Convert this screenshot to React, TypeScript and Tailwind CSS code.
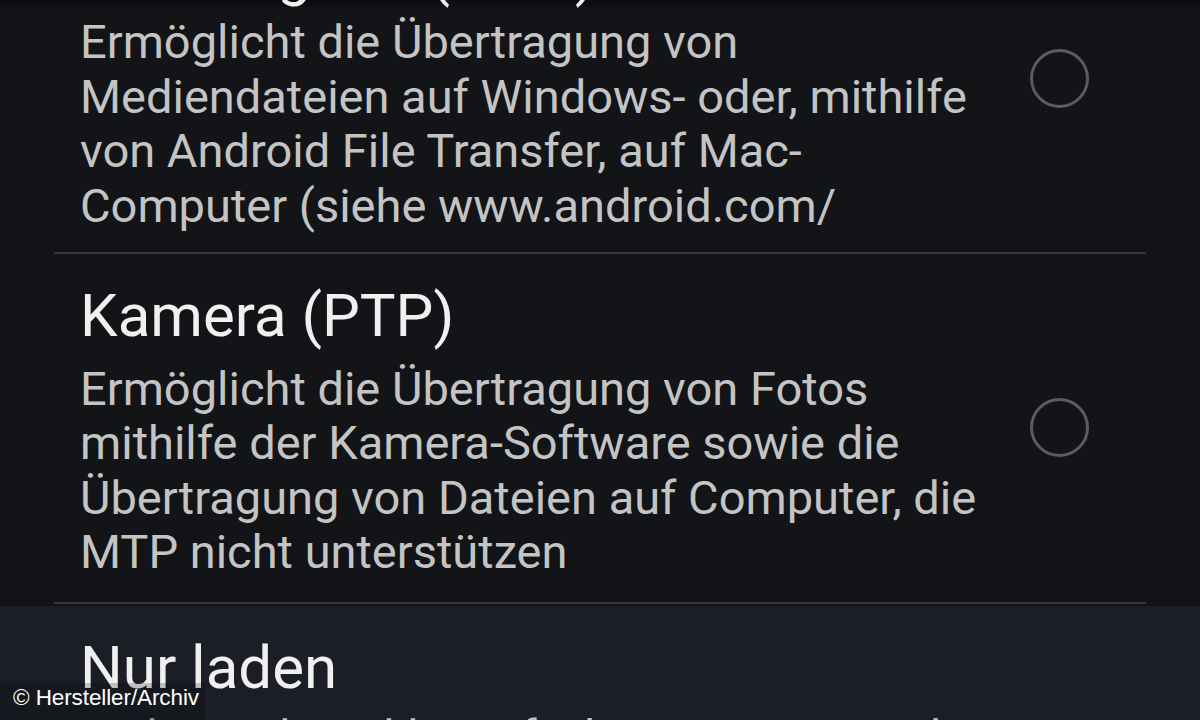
import React from "react";

type Item = {
  title: string;
  lines: string[];
  pt: string;
  titleMb: string;
  pb: string;
  circleMb: string;
  divider: boolean;
};

const items: Item[] = [
  {
    title: "Mediengerät (MTP)",
    lines: [
      "Ermöglicht die Übertragung von",
      "Mediendateien auf Windows- oder, mithilfe",
      "von Android File Transfer, auf Mac-",
      "Computer (siehe www.android.com/",
    ],
    pt: "pt-0",
    titleMb: "mb-[6px]",
    pb: "pb-[19px]",
    circleMb: "mb-[16px]",
    divider: true,
  },
  {
    title: "Kamera (PTP)",
    lines: [
      "Ermöglicht die Übertragung von Fotos",
      "mithilfe der Kamera-Software sowie die",
      "Übertragung von Dateien auf Computer, die",
      "MTP nicht unterstützen",
    ],
    pt: "pt-[27px]",
    titleMb: "mb-[10.5px]",
    pb: "pb-[22.5px]",
    circleMb: "mb-[5px]",
    divider: true,
  },
  {
    title: "Nur laden",
    lines: ["Lädt nur den Akku auf, ohne Dateien zu übertragen"],
    pt: "pt-[28.5px]",
    titleMb: "mb-[7.5px]",
    pb: "pb-0",
    circleMb: "mb-0",
    divider: false,
  },
];

function Row({ item }: { item: Item }) {
  return (
    <div>
      <div className={`flex items-center ${item.pt} ${item.pb}`}>
        <div className="flex-1 pl-[26px]">
          <div
            className={`text-[60px] leading-[70px] text-[#f0f0f0] whitespace-nowrap ${item.titleMb}`}
          >
            {item.title}
          </div>
          <div className="text-[47px] leading-[54.5px] text-[#c4c4c4]">
            {item.lines.map((l, i) => (
              <div key={i} className="whitespace-nowrap">
                {l}
              </div>
            ))}
          </div>
        </div>
        {item.divider && (
          <div
            className={`mr-[57px] ${item.circleMb} h-[59px] w-[59px] shrink-0 rounded-full border-[3px] border-[#5a5c5f]`}
          />
        )}
      </div>
      {item.divider && <div className="h-[2px] bg-[#383a3e]" />}
    </div>
  );
}

export default function App() {
  return (
    <div
      className="relative h-[720px] w-[1200px] overflow-hidden bg-[linear-gradient(to_bottom,#0c0e10_0px,#0c0e10_7px,#121417_7px,#121417_606px,#1b1e26_606px,#1b1e26_720px)]"
      style={{ fontFamily: "Roboto, 'Noto Sans', sans-serif" }}
    >
      <div className="ml-[54px] mt-[-61px] w-[1092px]">
        {items.map((it, i) => (
          <Row key={i} item={it} />
        ))}
      </div>
      <div className="absolute left-0 top-[683px] bg-black/20 pl-[13px] pr-[6px] pt-[3px] pb-[10px]">
        <div
          className="text-[22.5px] leading-[24px] tracking-[-0.1px] text-white whitespace-nowrap"
          style={{ fontFamily: "'Liberation Sans', Arial, sans-serif" }}
        >
          © Hersteller/Archiv
        </div>
      </div>
    </div>
  );
}
